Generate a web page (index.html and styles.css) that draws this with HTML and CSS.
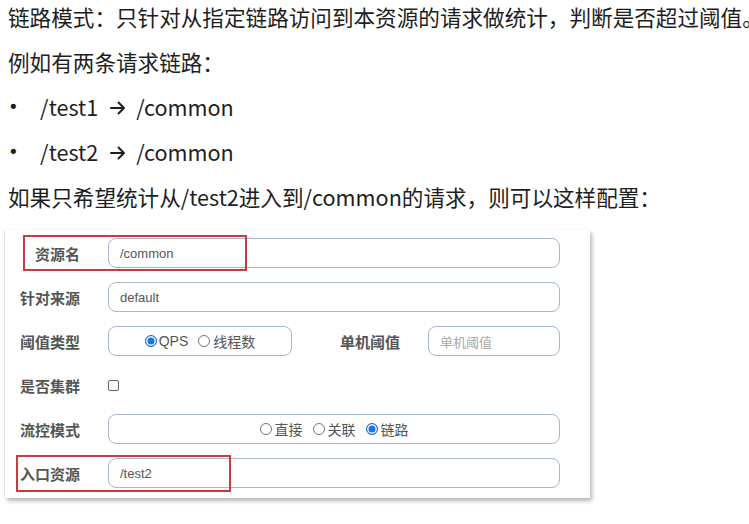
FILE: index.html
```html
<!DOCTYPE html>
<html lang="zh-CN">
<head>
<meta charset="utf-8">
<link rel="stylesheet" href="styles.css">
</head>
<body>
<div class="doc">
  <p class="line">链路模式：只针对从指定链路访问到本资源的请求做统计，判断是否超过阈值。</p>
  <p class="line">例如有两条请求链路：</p>
  <ul class="list">
    <li class="line item"><span class="dot">•</span><span class="path">/test1<svg class="arrow" viewBox="0 0 16 14" width="16" height="14"><path d="M1 7H14M8.5 1.5L14 7L8.5 12.5" fill="none" stroke="#1e1e1e" stroke-width="2" stroke-linecap="round" stroke-linejoin="round"/></svg>/common</span></li>
    <li class="line item"><span class="dot">•</span><span class="path">/test2<svg class="arrow" viewBox="0 0 16 14" width="16" height="14"><path d="M1 7H14M8.5 1.5L14 7L8.5 12.5" fill="none" stroke="#1e1e1e" stroke-width="2" stroke-linecap="round" stroke-linejoin="round"/></svg>/common</span></li>
  </ul>
  <p class="line">如果只希望统计从/test2进入到/common的请求，则可以这样配置：</p>
</div>

<div class="card">
  <div class="row">
    <label class="lbl">资源名</label>
    <div class="input"><span class="val">/common</span></div>
  </div>
  <div class="row">
    <label class="lbl">针对来源</label>
    <div class="input"><span class="val">default</span></div>
  </div>
  <div class="row">
    <label class="lbl">阈值类型</label>
    <div class="split">
      <div class="input radios">
        <span class="radio latin"><span class="circle on"></span>QPS</span>
        <span class="radio"><span class="circle"></span>线程数</span>
      </div>
      <label class="lbl">单机阈值</label>
      <div class="input"><span class="ph">单机阈值</span></div>
    </div>
  </div>
  <div class="row">
    <label class="lbl">是否集群</label>
    <div class="checkcell"><span class="check"></span></div>
  </div>
  <div class="row">
    <label class="lbl">流控模式</label>
    <div class="input radios">
      <span class="radio"><span class="circle"></span>直接</span>
      <span class="radio"><span class="circle"></span>关联</span>
      <span class="radio"><span class="circle on"></span>链路</span>
    </div>
  </div>
  <div class="row">
    <label class="lbl">入口资源</label>
    <div class="input"><span class="val">/test2</span></div>
  </div>
  <div class="mark mark-top"></div>
  <div class="mark mark-bottom"></div>
</div>
</body>
</html>
```

FILE: styles.css
```css
* { box-sizing: border-box; }
html, body { margin: 0; padding: 0; background: #ffffff; }
body {
  font-family: "Noto Sans CJK SC", "Noto Sans", sans-serif;
  color: #1e1e1e;
  width: 749px;
  height: 524px;
  overflow: hidden;
}
.doc { padding-left: 8px; }
.line {
  margin: 0 0 11px 0;
  height: 34px;
  line-height: 34px;
  font-size: 21.6px;
  white-space: nowrap;
}
.list { list-style: none; margin: 0; padding: 0; }
.item { display: flex; }
.dot { width: 32px; padding-left: 0; font-family: "DejaVu Sans", sans-serif; font-size: 18px; }
.path { display: inline-flex; align-items: center; }
.arrow { margin: 1px 10px 0 12px; }

.card {
  position: relative;
  margin: 16px 0 0 5px;
  width: 585px;
  padding: 8px 30px 10px 15px;
  background: #fff;
  box-shadow: 2px 3px 4px rgba(0,0,0,0.28), -1px 0 1px rgba(0,0,0,0.08);
  display: flex;
  flex-direction: column;
  gap: 14px;
}
.row {
  display: grid;
  grid-template-columns: 60px 452px;
  column-gap: 28px;
  height: 30px;
  align-items: center;
}
.lbl {
  font-size: 15px;
  font-weight: bold;
  color: #555;
  text-align: right;
  white-space: nowrap;
}
.input {
  height: 30px;
  border: 1px solid #a7b6c9;
  border-radius: 8px;
  display: flex;
  align-items: center;
  padding-left: 11px;
  font-family: "Liberation Sans", Arial, sans-serif;
  font-size: 13px;
  color: #555;
}
.val { color: #555; }
.ph { color: #aaa; font-family: "Noto Sans CJK SC", sans-serif; font-size: 13px; }
.split {
  display: grid;
  grid-template-columns: 184px 1fr 132px;
  column-gap: 28px;
  align-items: center;
}
.radios {
  justify-content: center;
  padding-left: 0;
  gap: 10px;
  font-size: 14px;
  color: #555;
}
.radio {
  display: inline-flex;
  align-items: center;
  gap: 3px;
  font-family: "Noto Sans CJK SC", sans-serif;
}
.radio.latin { font-family: "Liberation Sans", sans-serif; gap: 2px; }
.circle {
  width: 12px; height: 12px;
  border: 1px solid #777;
  border-radius: 50%;
  display: inline-block;
  background: #fff;
}
.circle.on {
  border: 1px solid #1a6fd8;
  background: #1a73e8;
  box-shadow: inset 0 0 0 1.5px #fff;
}
.checkcell { display: flex; align-items: center; }
.check {
  width: 11px; height: 11px;
  border: 1px solid #666;
  border-radius: 2px;
  display: inline-block;
}
.mark {
  position: absolute;
  border: 2px solid #cc3a40;
}
.mark-top { left: 18px; top: 5px; width: 224px; height: 36px; }
.mark-bottom { left: 11px; top: 225px; width: 215px; height: 37px; }
```
